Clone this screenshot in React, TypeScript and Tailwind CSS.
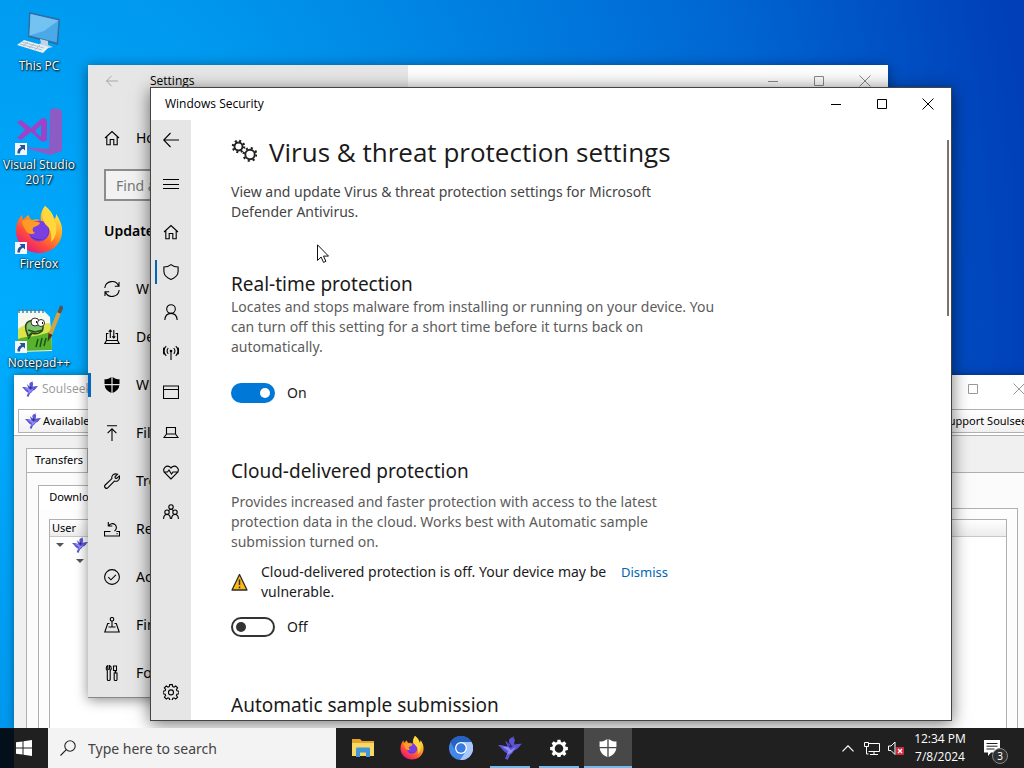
import React, { useState } from 'react';

interface IconProps {
  className?: string;
}

interface LineIconProps {
  children: React.ReactNode;
  className?: string;
}

// Base for the thin outlined icons, drawn on a 16px grid
const LineIcon: React.FC<LineIconProps> = ({ children, className = 'size-4' }) => (
  <svg
    viewBox="0 0 16 16"
    className={`${className} shrink-0`}
    fill="none"
    stroke="currentColor"
    strokeWidth={1.1}
    aria-hidden="true"
  >
    {children}
  </svg>
);

const BackIcon: React.FC<IconProps> = ({ className }) => (
  <LineIcon className={className}>
    <path d="M7.500 1 .7 8l6.800 7M.7 8H16" />
  </LineIcon>
);

const MenuIcon = () => (
  <LineIcon>
    <path d="M0 3.500h16M0 8.500h16M0 12.500h16" />
  </LineIcon>
);

const HomeIcon = () => (
  <LineIcon>
    <path d="M1 8 8 1.500 15 8M2.800 6.500v8.200h3.400V9.500h3.600v5.200h3.400V6.500" />
  </LineIcon>
);

const ShieldIcon = () => (
  <LineIcon>
    <path d="M8 .6C6 2.200 3.500 3 .9 3v4.600c0 3.600 2.800 6.200 7.100 7.900 4.300-1.700 7.100-4.300 7.100-7.900V3C12.500 3 10 2.200 8 .6Z" />
  </LineIcon>
);

const PersonIcon = () => (
  <LineIcon>
    <circle cx="8" cy="5" r="4.300" />
    <path d="M1.800 16c.3-4 2.700-6.600 6.200-6.600s5.900 2.600 6.200 6.600" />
  </LineIcon>
);

const AntennaIcon = () => (
  <LineIcon>
    <path d="M8 7v9M5.300 9.800a3.800 3.800 0 0 1 0-5.600M10.700 9.800a3.800 3.800 0 0 0 0-5.600M3.200 11.800a6.500 6.500 0 0 1 0-9.600M12.800 11.800a6.500 6.500 0 0 0 0-9.600M1.200 10.500a7 7 0 0 1 0-7M14.800 10.500a7 7 0 0 0 0-7" />
    <circle cx="8" cy="7" r=".8" fill="currentColor" />
  </LineIcon>
);

const AppWindowIcon = () => (
  <LineIcon>
    <path d="M.5 2h15v12.500H.5zM.5 5.500h15" />
  </LineIcon>
);

const LaptopIcon = () => (
  <LineIcon>
    <path d="M3.500 3.500h9v6.500h-9zM3.500 10 1 13.500h14L12.500 10" />
  </LineIcon>
);

const HeartIcon = () => (
  <LineIcon>
    <path d="M8 15 1.500 8.400A3.900 3.900 0 0 1 7 3l1 1.100L9 3a3.900 3.900 0 0 1 5.500 5.400ZM.5 8h4l1.500-2 2.500 4L10 8h5.500" />
  </LineIcon>
);

const FamilyIcon = () => (
  <LineIcon>
    <circle cx="8" cy="3" r="2.200" />
    <circle cx="4" cy="8.200" r="2.200" />
    <circle cx="12" cy="8.200" r="2.200" />
    <path d="M.6 15c0-2.600 1.300-4.500 3.400-4.500S7.400 12.400 7.400 15M8.600 15c0-2.600 1.300-4.500 3.400-4.500s3.400 1.900 3.400 4.500M5.600 6.600C6.200 5.700 7 5.200 8 5.200s1.800.5 2.400 1.400" />
  </LineIcon>
);

const GEAR_PATH =
  'M6.700.6h2.600l.4 2 1.300.6 1.700-1.200 1.900 1.900-1.200 1.700.5 1.200 2 .4v2.600l-2 .4-.5 1.300 1.200 1.600-1.900 1.900-1.700-1.200-1.300.6-.4 2H6.700l-.4-2-1.300-.6L3.300 15l-1.900-1.900 1.200-1.600-.5-1.300-2-.4V7.200l2-.4.5-1.200L1.400 3.900 3.300 2 5 3.200l1.300-.6Z';

const GearIcon = () => (
  <LineIcon>
    <path d={GEAR_PATH} />
    <circle cx="8" cy="8.400" r="2.500" />
  </LineIcon>
);

const GearsIcon = () => (
  <svg viewBox="0 0 26 26" className="size-[26px] shrink-0" fill="none" stroke="#222" aria-hidden="true">
    <circle cx="7.500" cy="7.500" r="4" strokeWidth="1.900" />
    <circle cx="7.500" cy="7.500" r="5.700" strokeWidth="2.200" strokeDasharray="2 2.477" />
    <circle cx="19" cy="15.500" r="4.700" strokeWidth="1.900" />
    <circle cx="19" cy="15.500" r="6.400" strokeWidth="2.200" strokeDasharray="2.100 2.926" />
  </svg>
);

const SyncIcon = () => (
  <LineIcon>
    <path d="M.8 7A7.200 7.200 0 0 1 14.600 5M15.200 9A7.200 7.200 0 0 1 1.400 11M15 1v4.200h-4.200M1 15v-4.200h4.200" />
  </LineIcon>
);

const DeliveryIcon = () => (
  <LineIcon>
    <path d="M4.500 4.500h-2v7h11v-7h-2M2.500 11.500.8 14.500h14.400l-1.700-3M6.300 9V1M4.700 2.600 6.300 1l1.500 1.600M9.800 1v8M8.200 7.400 9.800 9l1.500-1.600" />
  </LineIcon>
);

const DefenderIcon: React.FC<IconProps> = ({ className = 'size-4' }) => (
  <svg viewBox="0 0 16 16" className={`${className} shrink-0`} fill="currentColor" aria-hidden="true">
    <path d="M7.400 0v7H.5V2.300C3.200 2.300 5.500 1.500 7.400 0ZM8.600 0v7h6.900V2.300C12.800 2.300 10.500 1.500 8.600 0ZM.6 8.200h6.800V16C3.300 14.300 1 11.700.6 8.200ZM15.400 8.200H8.600V16c4.100-1.700 6.400-4.300 6.800-7.800Z" />
  </svg>
);

const BackupIcon = () => (
  <LineIcon>
    <path d="M3 .8h10M8 16V4M3.600 8.200 8 3.800l4.400 4.400" />
  </LineIcon>
);

const WrenchIcon = () => (
  <LineIcon>
    <path d="M13.600 1.200 11 3.800l.3 1.400 1.300.2L15.300 3c.6 2.200-.2 4-1.800 4.900-1 .5-2 .5-3.100.2L4 14.700A1.900 1.900 0 0 1 1.200 12L7.900 5.600C7.200 2.600 9.700 0 13.600 1.200Z" />
  </LineIcon>
);

const RecoveryIcon = () => (
  <LineIcon>
    <path d="M3.500 10.500h-3v4.500h15v-4.500h-3.200M2.500 10.500h4M4.800 4.800A4 4 0 1 1 10.500 10M4.300 1v4h4M12.500 12.800h1.200" />
  </LineIcon>
);

const ActivationIcon = () => (
  <LineIcon>
    <circle cx="8" cy="8" r="7.400" />
    <path d="m4.300 8.200 2.600 2.600 5-5" />
  </LineIcon>
);

const FindDeviceIcon = () => (
  <LineIcon>
    <circle cx="8" cy="2.300" r="1.800" />
    <path d="M8 4.200V10M5.500 6.500H3.700L.8 15h14.400l-2.900-8.500h-1.800M4.500 10h7" />
  </LineIcon>
);

const DeveloperIcon = () => (
  <LineIcon>
    <path d="M3.800.6v3.600h1.700V.6C6.700 1 7.300 2 7.300 3.300c0 1-.5 1.700-1.100 2.200v8.800c0 1.600-2.900 1.600-2.900 0V5.500C2.600 5 2.200 4.300 2.200 3.300 2.200 2 2.700 1 3.800.6ZM9.500 1h3v4.500h-.8V8h1.300v6.500c0 1.400-2.800 1.400-2.800 0V8h1V5.500h-1.700Z" />
  </LineIcon>
);

const SearchIcon = () => (
  <LineIcon>
    <circle cx="10" cy="6" r="5.200" />
    <path d="M6.300 9.700.5 15.500" />
  </LineIcon>
);

const BirdIcon: React.FC<IconProps> = ({ className = 'size-4' }) => (
  <svg viewBox="0 0 24 24" className={`${className} shrink-0`} aria-hidden="true">
    <path
      fill="#5b55d6"
      d="M11 5c0-2 1.500-3.600 3.400-3.600L16 0l-.3 2.200C17 3 17 4.500 16.400 5.700l-.3 2.800C18.500 8 21 7.600 24 7.700c-1.500 1-1.800 2-3 3.400-1.300 1.600-3 2.800-5 3.600-1.200 2-2.300 3.200-4 4.200L9.700 24 7 22.500l2.200-5C6.500 16 4.300 13.500 2.600 11.500L0 9c2.500-.2 6 .3 9.500 1.600L7 4.500C9 6 10.500 7.600 11.700 8.600Z"
    />
    <path fill="#928cf4" d="m10 11 3 3 5-3.500-4.500 6L9 19l1.300-4L4 10.600Z" />
    <path fill="#2c287f" d="m9 7 3 3v-3l1.500 2.500 1.500.5-3 2Z" />
  </svg>
);

const FirefoxIcon: React.FC<IconProps> = ({ className }) => (
  <svg viewBox="0 0 48 48" className={className} aria-hidden="true">
    <defs>
      <linearGradient id="fox-fire" x1="0.800" y1="0.100" x2="0.200" y2="0.950">
        <stop offset="0" stopColor="#ffe645" />
        <stop offset=".4" stopColor="#ff9420" />
        <stop offset=".7" stopColor="#ff4a3d" />
        <stop offset="1" stopColor="#e3157e" />
      </linearGradient>
    </defs>
    <path
      fill="url(#fox-fire)"
      d="M30 0c5 4 8 8 9 13 2-1 2-3 2-5 4 6 7 12 6 19-1 12-11 20-23 20S1 38 1 25c0-7 2-12 6-16l1 5c2-2 3-4 6-5 0 2 1 4 3 5 4-1 6-1 9 1-1-5 0-10 4-15Z"
    />
    <circle cx="24" cy="25" r="10.500" fill="#7a3fe0" />
    <path fill="#4f2bb5" d="M15 29c3 5 10 7 15 3 4-3 5-8 3-12 3 10-5 15-11 13-3-1-5-2-7-4Z" />
    <path fill="#ff9b26" d="M7 15c4-2 8-1 10 0 3 1 6 0 8 2-1 3-5 3-7 5-1 2 0 4 2 5-3 2-7 1-9-2-2-4-4-7-4-10Z" />
    <path fill="#ffd83d" d="M30 0c5 4 8 8 9 13 4 9 3 17-3 23 1-7 0-13-5-17-4-5-5-12-1-19Z" />
  </svg>
);

const ComputerIcon = () => (
  <svg viewBox="0 0 48 48" className="size-12" aria-hidden="true">
    <path d="M14 4 45 11 43 37 13 29Z" fill="#2d6fa3" />
    <path d="M15.500 6 43.500 12.500 41.700 34.500 14.500 27.500Z" fill="#4aa9e6" />
    <path d="M15.500 6 43.500 12.500 29 23 14.500 27.500Z" fill="#73c2f2" />
    <path d="m25 31 8 2v4l5 2-8 2-9-3 5-3Z" fill="#bdd5e4" />
    <path d="m9 32 25 7-6 6L2 37Z" fill="#e8eef2" />
    <path d="m7 34 22 6M5 36l22 6M13 34l-5 4M19 36l-5 4M25 37l-5 5" stroke="#9db2c2" strokeWidth=".8" />
  </svg>
);

const VisualStudioIcon = () => (
  <svg viewBox="0 0 48 48" className="size-12" aria-hidden="true">
    <path d="M35 3c3-3 9-2 12 1v40l-12 4-28-8 27 2Z" fill="#8d5bc4" />
    <path
      d="M2 15 6 13l10 8 10-9c2-1 4-1 6 1v20c-2 2-4 2-6 1l-10-9-10 8-4-2 8-8Zm24 3-6 6 6 6Z"
      fill="#9d43c8"
      fillRule="evenodd"
    />
  </svg>
);

const NotepadIcon = () => (
  <svg viewBox="0 0 48 48" className="size-12" aria-hidden="true">
    <path d="M3 6h26l6 6 2 34-34 1Z" fill="#f5f8ee" />
    <path d="M3 24c10-8 20-5 32-6l2 27-34 1Z" fill="#dce44c" />
    <path d="M3 34c8-3 22-2 33-8l1 19-34 1Z" fill="#57b22e" />
    <path d="M4 4v4M8 4v4M12 4v4M16 4v4M20 4v4M24 4v4M28 4v4" stroke="#537f98" strokeWidth="1.500" />
    <path d="M11 25c-2-8 5-12 10-7l7 3c1 7-7 9-11 7l-4 3Z" fill="#80c46a" stroke="#27431d" strokeWidth="1.500" />
    <circle cx="20" cy="17" r="4" fill="#fff" stroke="#333" />
    <circle cx="26" cy="18" r="3.500" fill="#fff" stroke="#333" />
    <path d="M21 17h1M27 18h1" stroke="#111" strokeWidth="2" />
    <path d="m13 25 7 2 8-2M17 28l-4 6M25 42l2-9M29 41l2-8M21 42l2-8" stroke="#1e5414" strokeWidth="1.500" fill="none" />
    <path d="M45 5 35 30" stroke="#d6a33c" strokeWidth="4" />
    <path d="M47 1 44 8" stroke="#555" strokeWidth="4" />
    <path d="m33.500 28-1 9 5-7Z" fill="#4a3215" />
  </svg>
);

const ShortcutArrow = () => (
  <svg viewBox="0 0 12 12" className="absolute bottom-0 left-0 size-3" aria-hidden="true">
    <path d="M0 0h12v12H0Z" fill="#f4f7fb" />
    <path d="M4.500 2H10v5.500L8.200 5.700C6 6.500 5 8 5 10.500H2.500C2 7.500 3.500 5 6.300 3.900Z" fill="#24539b" />
  </svg>
);

const ExplorerIcon = () => (
  <svg viewBox="0 0 24 22" className="w-6 h-[22px]" aria-hidden="true">
    <path d="M1 2h8l2 2h12v4H1Z" fill="#e3a52c" />
    <path d="M1 6h22v13H1Z" fill="#fbd866" />
    <path d="M5 20v-8c0-1 .500-1.500 1.500-1.500h11c1 0 1.500.5 1.500 1.500v8h-4v-4.500H9V20Z" fill="#3f96d8" />
  </svg>
);

const ChromiumIcon = () => (
  <svg viewBox="0 0 24 24" className="size-6" aria-hidden="true">
    <circle cx="12" cy="12" r="12" fill="#4587e8" />
    <path d="M12 6h10.500A12 12 0 0 1 11 24l6.200-9Z" fill="#a9c7fa" />
    <path d="M1.600 6A12 12 0 0 1 22.500 6H12L6.800 15Z" fill="#2762c2" />
    <circle cx="12" cy="12" r="6" fill="#fff" />
    <circle cx="12" cy="12" r="4.700" fill="#3a7ce0" />
  </svg>
);

const WarningIcon = () => (
  <svg viewBox="0 0 18 18" className="size-[18px] shrink-0" aria-hidden="true">
    <path d="M8.500 1.500 16 17H1Z" fill="#fdb913" stroke="#2b2b2b" strokeWidth="1.300" strokeLinejoin="round" />
    <path d="M8.500 6.500v5.500M8.500 13.500v1.700" stroke="#2b2b2b" strokeWidth="1.500" />
  </svg>
);

const WindowButtons = () => (
  <div className="flex h-full ml-auto">
    <button aria-label="Minimize" className="w-[46px] h-full flex items-center justify-center">
      <svg viewBox="0 0 10 10" className="size-2.5" stroke="currentColor">
        <path d="M0 5.500h10" />
      </svg>
    </button>
    <button aria-label="Maximize" className="w-[46px] h-full flex items-center justify-center">
      <svg viewBox="0 0 10 10" className="size-2.5" fill="none" stroke="currentColor">
        <path d="M.5.5h9v9h-9z" />
      </svg>
    </button>
    <button aria-label="Close" className="w-[46px] h-full flex items-center justify-center">
      <svg viewBox="0 0 12 12" className="size-3" stroke="currentColor">
        <path d="m.5.5 11 11M11.500.5l-11 11" />
      </svg>
    </button>
  </div>
);

const desktopItems = [
  { label: 'This PC', icon: <ComputerIcon />, shortcut: false },
  { label: 'Visual Studio 2017', icon: <VisualStudioIcon />, shortcut: true },
  { label: 'Firefox', icon: <FirefoxIcon className="size-12" />, shortcut: true },
  { label: 'Notepad++', icon: <NotepadIcon />, shortcut: true },
];

const DesktopIcons = () => (
  <div className="w-[78px] pt-2 flex flex-col">
    {desktopItems.map((item) => (
      <button key={item.label} className="h-[99px] flex flex-col items-center">
        <span className="relative">
          {item.icon}
          {item.shortcut && <ShortcutArrow />}
        </span>
        <span className="mt-0.5 font-['Open_Sans',sans-serif] text-xs leading-[15px] text-white [text-shadow:1px_1px_2px_#000,0_0_2px_#000]">
          {item.label}
        </span>
      </button>
    ))}
  </div>
);

const SoulseekWindow = () => (
  <section className="absolute left-[14px] -right-[18px] top-[375px] bottom-0 flex flex-col bg-[#f0f0f0] text-[11px] text-black overflow-hidden shadow-[0_0_8px_rgba(0,0,0,0.4)]">
    <header className="h-7 shrink-0 bg-white flex items-center pl-2 font-['Open_Sans',sans-serif] text-xs text-[#999]">
      <BirdIcon />
      <span className="ml-1">SoulseekQt</span>
      <WindowButtons />
    </header>
    <div className="h-[33px] shrink-0 bg-white border-b border-[#b0b0b0] px-1 pt-1.5 flex items-start justify-between">
      <button className="h-6 px-1.5 border border-[#b0b0b0] bg-gradient-to-b from-white to-[#f0f0f0] flex items-center gap-0.5">
        <BirdIcon />
        Available
      </button>
      <button className="h-6 px-1 border border-[#b0b0b0] bg-gradient-to-b from-white to-[#f0f0f0] whitespace-nowrap">
        Support Soulseek
      </button>
    </div>
    <div className="flex-1 min-h-0 px-3 pt-3 flex flex-col">
      <div className="flex">
        <button className="h-6 w-[62px] -mb-px border border-b-0 border-[#b0b0b0] bg-[#fbfbfb] relative pl-1">
          Transfers
        </button>
        <button className="h-6 w-16 border border-l-0 border-b-0 border-[#b0b0b0]">Search</button>
      </div>
      <div className="flex-1 min-h-0 border border-b-0 border-[#b0b0b0] bg-[#fbfbfb] px-[11px] pt-3 flex flex-col">
        <div className="flex">
          <button className="h-6 w-20 -mb-px border border-b-0 border-[#b0b0b0] bg-white relative">
            Downloads
          </button>
        </div>
        <div className="flex-1 min-h-0 border border-b-0 border-[#b0b0b0] bg-[#fdfdfd] px-2.5 pt-2.5 flex flex-col">
          <div className="flex-1 border border-b-0 border-[#b0b0b0] bg-white">
            <table className="w-full text-left">
              <thead>
                <tr className="h-4 bg-gradient-to-b from-white to-[#ececec] border-b border-[#c8c8c8]">
                  <th className="font-normal leading-4 px-0.5">User</th>
                </tr>
              </thead>
              <tbody>
                <tr>
                  <td className="leading-4 pl-1.5">
                    <span className="flex items-center gap-2 h-4">
                      <span className="border-4 border-b-0 border-transparent border-t-[#555]" />
                      <BirdIcon />
                    </span>
                  </td>
                </tr>
                <tr>
                  <td className="pl-[26px]">
                    <span className="flex items-center h-4">
                      <span className="border-4 border-b-0 border-transparent border-t-[#555]" />
                    </span>
                  </td>
                </tr>
              </tbody>
            </table>
          </div>
        </div>
      </div>
    </div>
  </section>
);

const settingsItems = [
  { label: 'Windows Update', icon: <SyncIcon /> },
  { label: 'Delivery Optimization', icon: <DeliveryIcon /> },
  { label: 'Windows Security', icon: <DefenderIcon />, active: true },
  { label: 'Files backup', icon: <BackupIcon /> },
  { label: 'Troubleshoot', icon: <WrenchIcon /> },
  { label: 'Recovery', icon: <RecoveryIcon /> },
  { label: 'Activation', icon: <ActivationIcon /> },
  { label: 'Find my device', icon: <FindDeviceIcon /> },
  { label: 'For developers', icon: <DeveloperIcon /> },
];

const SettingsWindow = () => (
  <section className="absolute left-[88px] right-[136px] top-[65px] bottom-[30px] bg-white text-sm text-black flex overflow-hidden border-b border-[#888] shadow-[0_2px_12px_rgba(0,0,0,0.45)]">
    <nav className="w-80 shrink-0 bg-[#e6e6e6]">
      <div className="h-8 flex items-center pl-[18px] font-['Open_Sans',sans-serif] text-xs">
        <BackIcon className="size-3 text-[#999]" />
        <span className="ml-8">Settings</span>
      </div>
      <a href="#home" className="h-12 mt-[17px] pl-4 flex items-center gap-4">
        <HomeIcon />
        Home
      </a>
      <div className="mx-4 mt-[7px]">
        <input
          type="text"
          aria-label="Find a setting"
          placeholder="Find a setting"
          className="w-full h-8 border-2 border-[#8c8c8c] bg-[#f2f2f2] px-2.5 placeholder:text-[#777]"
        />
      </div>
      <h2 className="mt-5 pl-4 leading-5 font-semibold">Update &amp; Security</h2>
      <div className="mt-6">
        {settingsItems.map((item) => (
          <a key={item.label} href="#settings" className="relative h-12 pl-4 flex items-center gap-4">
            {item.active && <span className="absolute left-0 top-3 w-[3px] h-6 bg-[#0067c0]" />}
            {item.icon}
            {item.label}
          </a>
        ))}
      </div>
    </nav>
    <div className="flex-1">
      <div className="h-8 flex text-[#888] bg-gradient-to-b from-white to-[#f2f2f2]">
        <WindowButtons />
      </div>
    </div>
  </section>
);

interface ToggleProps {
  id: string;
  label: string;
  initial: boolean;
}

const Toggle: React.FC<ToggleProps> = ({ id, label, initial }) => {
  const [on, setOn] = useState(initial);

  return (
    <div className="flex items-center gap-3 h-5">
      <input
        id={id}
        type="checkbox"
        role="switch"
        aria-label={label}
        checked={on}
        onChange={() => setOn(!on)}
        className="appearance-none w-11 h-5 rounded-full border-2 border-[#333] bg-white flex items-center px-[3px] before:block before:size-2.5 before:rounded-full before:bg-[#333] checked:border-[#0078d7] checked:bg-[#0078d7] checked:justify-end checked:before:bg-white"
      />
      <label htmlFor={id}>{on ? 'On' : 'Off'}</label>
    </div>
  );
};

const securityItems = [
  { label: 'Home', icon: <HomeIcon /> },
  { label: 'Virus & threat protection', icon: <ShieldIcon />, active: true },
  { label: 'Account protection', icon: <PersonIcon /> },
  { label: 'Firewall & network protection', icon: <AntennaIcon /> },
  { label: 'App & browser control', icon: <AppWindowIcon /> },
  { label: 'Device security', icon: <LaptopIcon /> },
  { label: 'Device performance & health', icon: <HeartIcon /> },
  { label: 'Family options', icon: <FamilyIcon /> },
];

const SecurityWindow = () => (
  <section className="absolute left-[150px] right-[72px] top-[87px] bottom-[7px] flex flex-col bg-white border border-[#444] text-sm leading-5 text-[#1a1a1a] shadow-[0_3px_16px_rgba(0,0,0,0.55)]">
    <header className="h-8 shrink-0 flex items-center pl-3.5 font-['Open_Sans',sans-serif] text-xs text-black">
      <span>Windows Security</span>
      <WindowButtons />
    </header>
    <div className="flex-1 min-h-0 flex">
      <nav className="w-10 shrink-0 bg-[#e6e6e6] flex flex-col text-black">
        <button aria-label="Back" className="h-10 flex items-center justify-center">
          <BackIcon />
        </button>
        <button aria-label="Menu" className="h-10 mt-1 mb-2 flex items-center justify-center">
          <MenuIcon />
        </button>
        {securityItems.map((item) => (
          <a
            key={item.label}
            href="#security"
            aria-label={item.label}
            className="relative h-10 flex items-center justify-center"
          >
            {item.active && <span className="absolute left-1 top-2 w-0.5 h-6 bg-[#0067b8]" />}
            {item.icon}
          </a>
        ))}
        <a href="#settings" aria-label="Settings" className="h-10 mt-auto mb-2 flex items-center justify-center">
          <GearIcon />
        </a>
      </nav>
      <main className="relative flex-1 min-w-0 overflow-hidden pl-10 pt-3">
        <h1 className="flex items-center gap-3 font-['Open_Sans',sans-serif] text-[26px] leading-10 whitespace-nowrap">
          <GearsIcon />
          Virus &amp; threat protection settings
        </h1>
        <p className="mt-2.5 max-w-[440px] text-[#444]">
          View and update Virus &amp; threat protection settings for Microsoft Defender Antivirus.
        </p>

        <h2 className="mt-[49px] text-[19px] leading-[26px]">Real-time protection</h2>
        <p className="max-w-[490px] text-[#5c5c5c]">
          Locates and stops malware from installing or running on your device. You can turn off this
          setting for a short time before it turns back on automatically.
        </p>
        <div className="mt-[26px]">
          <Toggle id="realtime" label="Real-time protection" initial={true} />
        </div>

        <h2 className="mt-[55px] text-[19px] leading-[26px]">Cloud-delivered protection</h2>
        <p className="mt-2 max-w-[440px] text-[#5c5c5c]">
          Provides increased and faster protection with access to the latest protection data in the
          cloud. Works best with Automatic sample submission turned on.
        </p>
        <div className="mt-2.5 flex">
          <div className="flex items-center gap-3">
            <WarningIcon />
            <p className="w-[352px]">
              Cloud-delivered protection is off. Your device may be vulnerable.
            </p>
          </div>
          <a href="#dismiss" className="ml-2 text-[13px] text-[#0066b4]">
            Dismiss
          </a>
        </div>
        <div className="mt-[15px]">
          <Toggle id="cloud" label="Cloud-delivered protection" initial={false} />
        </div>

        <h2 className="mt-[55px] text-[19px] leading-[26px]">Automatic sample submission</h2>
        <div className="absolute right-0.5 top-5 w-0.5 h-44 bg-[#7d7270]" />
      </main>
    </div>
  </section>
);

const taskbarApps = [
  { label: 'File Explorer', icon: <ExplorerIcon /> },
  { label: 'Firefox', icon: <FirefoxIcon className="size-6" /> },
  { label: 'Chromium', icon: <ChromiumIcon /> },
  { label: 'SoulseekQt', icon: <BirdIcon className="size-6" />, open: true },
  {
    label: 'Settings',
    open: true,
    icon: (
      <svg viewBox="0 0 16 16" className="size-[18px]" aria-hidden="true">
        <path
          fillRule="evenodd"
          fill="#fff"
          d={`${GEAR_PATH}M8 4.600a3.800 3.800 0 1 0 0 7.600 3.800 3.800 0 0 0 0-7.600Z`}
        />
      </svg>
    ),
  },
  { label: 'Windows Security', icon: <DefenderIcon className="size-[18px]" />, open: true, focused: true },
];

const Taskbar = () => (
  <footer className="h-10 shrink-0 bg-[linear-gradient(90deg,#03101c_14px,#202020_14px)] text-white flex">
    <button aria-label="Start" className="w-12 flex items-center justify-center">
      <svg viewBox="0 0 16 16" className="size-4" fill="#fff" aria-hidden="true">
        <path d="M0 2.300 6.500 1.400v6.100H0ZM7.500 1.200 16 0v7.500H7.500ZM0 8.500h6.500v6.100L0 13.700ZM7.500 8.500H16V16l-8.500-1.200Z" />
      </svg>
    </button>
    <div className="w-72 bg-[#f3f3f3] text-[#222] flex items-center pl-3 gap-3">
      <SearchIcon />
      <input
        type="text"
        aria-label="Type here to search"
        placeholder="Type here to search"
        className="w-full h-full text-sm outline-none placeholder:text-[#444]"
      />
    </div>
    <div className="ml-[3px] flex gap-px">
      {taskbarApps.map((app) => (
        <button
          key={app.label}
          aria-label={app.label}
          className={`relative w-12 flex items-center justify-center ${app.focused ? 'bg-[#484848]' : ''}`}
        >
          {app.icon}
          {app.open && (
            <span
              className={`absolute bottom-0 h-0.5 bg-[#76b9ed] ${app.focused ? 'inset-x-0' : 'inset-x-1'}`}
            />
          )}
        </button>
      ))}
    </div>
    <div className="ml-auto flex items-center">
      <button aria-label="Show hidden icons" className="w-6 flex justify-center">
        <svg viewBox="0 0 12 7" className="w-3 h-[7px]" fill="none" stroke="#fff" strokeWidth="1.200">
          <path d="m.5 6.300 5.500-5.500 5.500 5.500" />
        </svg>
      </button>
      <button aria-label="Network" className="w-6 flex justify-center">
        <svg viewBox="0 0 16 15" className="w-4 h-[15px]" fill="none" stroke="#fff">
          <path d="M5 2.500h10.500v8H4.500M10 10.500v3M6 13.500h8M.5 1.500h4v4h-4zM2.500 5.500v7.500h2" />
        </svg>
      </button>
      <button aria-label="Volume" className="w-6 flex justify-center">
        <svg viewBox="0 0 16 15" className="w-4 h-[15px]" fill="none" stroke="#fff">
          <path d="M.5 5h2.500l4-4v12.500L3 9.500H.5z" />
          <path d="M8.500 6.500H15.500v7H8.500z" fill="#d6293e" stroke="#d6293e" />
          <path d="m10 8 4 4M14 8l-4 4" strokeWidth="1.300" />
        </svg>
      </button>
      <div className="w-16 text-center font-['Open_Sans',sans-serif] text-xs leading-[18px]">
        <p>12:34 PM</p>
        <p>7/8/2024</p>
      </div>
      <button aria-label="Notifications, 3 new" className="relative w-10 h-10 mr-3 flex items-center justify-center">
        <svg viewBox="0 0 16 16" className="size-4" aria-hidden="true">
          <path d="M0 0h16v12.500H7L4 16v-3.500H0Z" fill="#fff" />
          <path d="M2.500 3.500h11M2.500 6.200h11M2.500 9h8" stroke="#202020" />
        </svg>
        <span className="absolute right-1 bottom-1 size-4 rounded-full border border-[#888] bg-[#303030] text-[10px] leading-[14px] text-center">
          3
        </span>
      </button>
    </div>
  </footer>
);

const App: React.FC = () => (
  <div className="h-screen flex flex-col overflow-hidden font-['Noto_Sans','Open_Sans',sans-serif]">
    <div className="relative flex-1 min-h-0 overflow-hidden bg-[radial-gradient(110%_200%_at_0%_45%,#00adff_0%,#0098ee_27%,#0066d2_68%,#003fb8_92%)]">
      <DesktopIcons />
      <SoulseekWindow />
      <SettingsWindow />
      <SecurityWindow />
      <svg viewBox="0 0 12 19" className="absolute left-[317px] top-[244px] w-3 h-[19px]" aria-hidden="true">
        <path d="M.5.8v15.700l3.600-3.500 2.400 5.400 2.400-1-2.400-5.300h5Z" fill="#fff" stroke="#111" />
      </svg>
    </div>
    <Taskbar />
  </div>
);

export default App;
